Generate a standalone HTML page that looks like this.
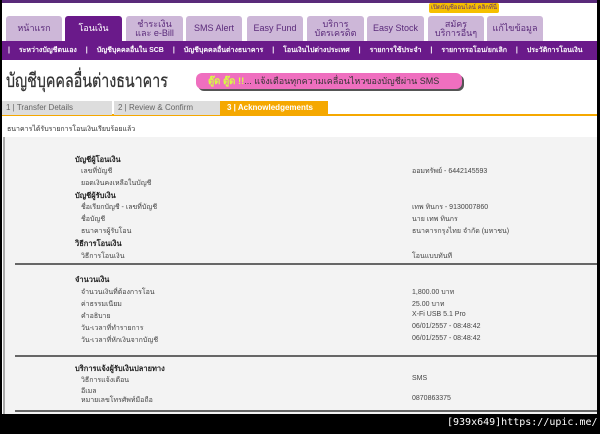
<!DOCTYPE html>
<html><head><meta charset="utf-8"><style>
*{margin:0;padding:0;box-sizing:border-box}
body{width:600px;height:434px;background:#000;position:relative;overflow:hidden;font-family:"Liberation Sans","Noto Sans CJK SC",sans-serif}
.pg{position:absolute;left:2px;top:0;width:595px;height:414px;background:#fff;overflow:hidden}
.top{position:absolute;left:0;top:0;width:100%;height:3px;background:#5a2a7a}
.tab{position:absolute;top:16px;height:25px;background:#cdb7d8;border-radius:3px 3px 0 0;color:#5a2a7a;font-size:9px;text-align:center;display:flex;align-items:center;justify-content:center;line-height:9px}
.tab.on{background:#6a1a8a;color:#fff}
.nav{position:absolute;top:41px;left:0;width:100%;height:19px;background:#6a1a8a;color:#fff;font-size:7px;font-weight:bold;white-space:nowrap;padding-left:6px;line-height:19px}
.nav span{margin:0 7px}
.pop{position:absolute;left:427px;top:3px;width:70px;height:10px;background:#f5c000;border-radius:2px;font-size:6px;color:#5a2a7a;text-align:center;line-height:10px}
.title{position:absolute;left:4px;top:66px;font-size:19px;color:#333;transform:scaleX(0.75);transform-origin:left top;white-space:nowrap;font-weight:500;-webkit-text-stroke:0.3px #333}
.banner{position:absolute;left:194px;top:73px;width:266px;height:16px;background:#ef6fbf;border-radius:6px;box-shadow:2px 2px 0 #555;font-size:9px;color:#333;line-height:16px;padding-left:12px;white-space:nowrap}
.banner b{color:#d8ff40;font-size:9.5px}
.steps{position:absolute;left:0;top:101px;width:100%;height:15px;border-bottom:2px solid #f5a800}
.st{position:absolute;top:0;height:14px;background:#ddd;color:#666;font-size:8px;line-height:14px;padding-left:4px}
.st.on{background:#f5a800;color:#fff;font-weight:bold;padding-left:7px}
.msg{position:absolute;left:5px;top:124px;font-size:7px;color:#333}
.panel{position:absolute;left:1px;top:137px;width:594px;height:277px;background:#f3f3f3;border-left:2px solid #aaa}
.r{position:absolute;font-size:7px;color:#444;white-space:nowrap}
.h{font-weight:bold;color:#222;font-size:7.5px}
.hr{position:absolute;left:13px;width:582px;height:2px;background:#666}
</style></head><body>
<div class="pg">
<div class="top"></div>
<div class="pop">เปิดบัญชีออนไลน์ คลิกที่นี่</div>
<div class="tab" style="left:4px;width:56px">หน้าแรก</div>
<div class="tab on" style="left:63px;width:57px">โอนเงิน</div>
<div class="tab" style="left:124px;width:57px">ชำระเงิน<br>และ e-Bill</div>
<div class="tab" style="left:184px;width:56px">SMS Alert</div>
<div class="tab" style="left:245px;width:56px">Easy Fund</div>
<div class="tab" style="left:305px;width:57px">บริการ<br>บัตรเครดิต</div>
<div class="tab" style="left:365px;width:57px">Easy Stock</div>
<div class="tab" style="left:426px;width:56px">สมัคร<br>บริการอื่นๆ</div>
<div class="tab" style="left:485px;width:56px">แก้ไขข้อมูล</div>
<div class="nav">| <span>ระหว่างบัญชีตนเอง</span> | <span>บัญชีบุคคลอื่นใน SCB</span> | <span>บัญชีบุคคลอื่นต่างธนาคาร</span> | <span>โอนเงินไปต่างประเทศ</span> | <span>รายการใช้ประจำ</span> | <span>รายการรอโอน/ยกเลิก</span> | <span>ประวัติการโอนเงิน</span></div>
<div class="title">บัญชีบุคคลอื่นต่างธนาคาร</div>
<div class="banner"><b>ตู๊ด ตู๊ด !!</b>... แจ้งเตือนทุกความเคลื่อนไหวของบัญชีผ่าน SMS</div>
<div class="steps">
<div class="st" style="left:0;width:110px">1 | Transfer Details</div>
<div class="st" style="left:112px;width:106px">2 | Review &amp; Confirm</div>
<div class="st on" style="left:218px;width:108px">3 | Acknowledgements</div>
</div>
<div class="msg">ธนาคารได้รับรายการโอนเงินเรียบร้อยแล้ว</div>
<div class="panel"></div>
<div class="r h" style="left:73px;top:154px">บัญชีผู้โอนเงิน</div>
<div class="r" style="left:79px;top:166px">เลขที่บัญชี</div><div class="r" style="left:410px;top:166px">ออมทรัพย์ - 6442145593</div>
<div class="r" style="left:79px;top:178px">ยอดเงินคงเหลือในบัญชี</div>
<div class="r h" style="left:73px;top:190px">บัญชีผู้รับเงิน</div>
<div class="r" style="left:79px;top:202px">ชื่อเรียกบัญชี - เลขที่บัญชี</div><div class="r" style="left:410px;top:202px">เทพ ทินกร - 9130007860</div>
<div class="r" style="left:79px;top:214px">ชื่อบัญชี</div><div class="r" style="left:410px;top:214px">นาย เทพ ทินกร</div>
<div class="r" style="left:79px;top:226px">ธนาคารผู้รับโอน</div><div class="r" style="left:410px;top:226px">ธนาคารกรุงไทย จำกัด (มหาชน)</div>
<div class="r h" style="left:73px;top:238px">วิธีการโอนเงิน</div>
<div class="r" style="left:79px;top:251px">วิธีการโอนเงิน</div><div class="r" style="left:410px;top:251px">โอนแบบทันที</div>
<div class="hr" style="top:263px"></div>
<div class="r h" style="left:73px;top:274px">จำนวนเงิน</div>
<div class="r" style="left:79px;top:287px">จำนวนเงินที่ต้องการโอน</div><div class="r" style="left:410px;top:287px">1,800.00 บาท</div>
<div class="r" style="left:79px;top:299px">ค่าธรรมเนียม</div><div class="r" style="left:410px;top:299px">25.00 บาท</div>
<div class="r" style="left:79px;top:311px">คำอธิบาย</div><div class="r" style="left:410px;top:311px">X-Fi USB 5.1 Pro</div>
<div class="r" style="left:79px;top:323px">วัน-เวลาที่ทำรายการ</div><div class="r" style="left:410px;top:323px">06/01/2557 - 08:48:42</div>
<div class="r" style="left:79px;top:335px">วัน-เวลาที่หักเงินจากบัญชี</div><div class="r" style="left:410px;top:335px">06/01/2557 - 08:48:42</div>
<div class="hr" style="top:355px"></div>
<div class="r h" style="left:73px;top:363px">บริการแจ้งผู้รับเงินปลายทาง</div>
<div class="r" style="left:79px;top:375px">วิธีการแจ้งเตือน</div><div class="r" style="left:410px;top:375px">SMS</div>
<div class="r" style="left:79px;top:386px">อีเมล</div>
<div class="r" style="left:79px;top:395px">หมายเลขโทรศัพท์มือถือ</div><div class="r" style="left:410px;top:395px">0870863375</div>
<div class="hr" style="top:410px"></div>
</div>
<div style="position:absolute;left:447px;top:417px;color:#fff;font-family:'DejaVu Sans Mono',monospace;font-size:10px;white-space:nowrap">[939x649]https://upic.me/</div>
</body></html>
